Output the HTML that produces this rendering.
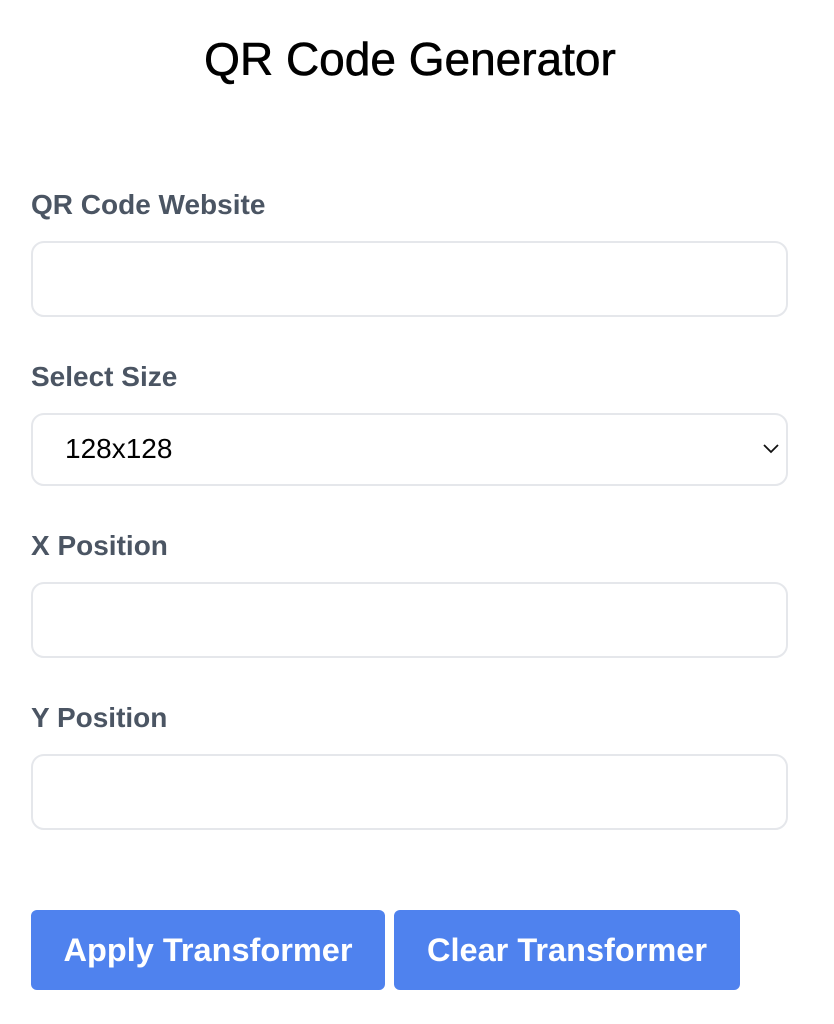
<!DOCTYPE html>
<html><head><meta charset="utf-8"><style>
body{margin:0;width:834px;height:1024px;background:#fff;font-family:"Liberation Sans",Arial,sans-serif;position:relative;overflow:hidden}
.a{position:absolute}
h1{position:absolute;left:0;width:820px;top:32px;margin:0;text-align:center;font-size:46px;font-weight:400;color:#000;line-height:54px;-webkit-text-stroke:0.6px #000}
.l{position:absolute;left:31px;font-size:28px;font-weight:700;color:#4b5563;line-height:30px}
.i{position:absolute;left:31px;width:753px;border:2px solid #e5e7eb;border-radius:13px;background:#fff}
.b{position:absolute;top:910px;height:80px;background:#4f82ee;border-radius:6px;color:#fff;font-size:32.5px;font-weight:700;text-align:center;line-height:80px}
</style></head><body>
<h1>QR Code Generator</h1>
<div class="l" style="top:190px">QR Code Website</div>
<div class="i" style="top:241px;height:72px"></div>
<div class="l" style="top:362px">Select Size</div>
<div class="i" style="top:413px;height:69px"><span class="a" style="left:32px;top:18px;font-size:28px;color:#000">128x128</span>
<svg class="a" style="left:729px;top:28px" width="18" height="11" viewBox="0 0 18 11"><path d="M2 2 L9 9 L16 2" fill="none" stroke="#111" stroke-width="1.8"/></svg></div>
<div class="l" style="top:531px">X Position</div>
<div class="i" style="top:582px;height:72px"></div>
<div class="l" style="top:703px">Y Position</div>
<div class="i" style="top:754px;height:72px"></div>
<div class="b" style="left:31px;width:354px">Apply Transformer</div>
<div class="b" style="left:394px;width:346px">Clear Transformer</div>
</body></html>
